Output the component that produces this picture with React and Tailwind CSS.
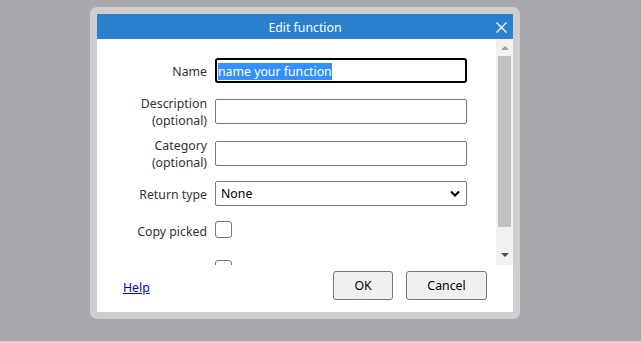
import React from "react";

const font = { fontFamily: '"Noto Sans", "Open Sans", sans-serif' };

const Row = ({ label, className, labelClass = "", children }) => (
    <div className={`flex items-center ${className}`}>
        <div className={`w-[118px] shrink-0 pr-[8px] text-right text-[12.3px] leading-[17px] text-[#333] ${labelClass}`}>{label}</div>
        <div className="flex items-center">{children}</div>
    </div>
);

const Checkbox = () => (
    <div className="h-[17px] w-[17px] rounded-[3px] border border-[#767676] bg-white" />
);

export default function App() {
    return (
        <div className="flex h-[341px] w-[641px] items-start bg-[#a9a8ac] pl-[90px] pt-[7px]" style={font}>
            <div className="rounded-[7px] bg-[#cecece] p-[7px]">
                <div className="flex h-[298px] w-[416px] flex-col bg-white">
                    {/* title bar */}
                    <div className="flex h-[25px] items-center bg-[#2b80cd] text-white">
                        <div className="flex-1 pl-[24px] pt-[3px] text-center text-[12.3px]">Edit function</div>
                        <div className="flex w-[24px] items-center justify-center pt-[1px]">
                            <svg width="11" height="11" viewBox="0 0 11 11">
                                <path d="M0.5 0.5L10.5 10.5M10.5 0.5L0.5 10.5" stroke="white" strokeWidth="1.3" />
                            </svg>
                        </div>
                    </div>

                    {/* scroll area */}
                    <div className="flex h-[226px] overflow-hidden">
                        <div className="flex-1 overflow-hidden">
                            <Row label="Name" className="mt-[19px] h-[25px]" labelClass="pt-[1px]">
                                <div className="flex h-[25px] w-[252px] items-center rounded-[3px] border-2 border-black pl-[1px] pt-[1px] text-[12.3px]">
                                    <span className="bg-[#3390ff] leading-[17px] text-white">name your function</span>
                                </div>
                            </Row>
                            <Row label={<>Description<br />(optional)</>} className="mt-[11px] h-[34px]" labelClass="pt-[2px]">
                                <div className="h-[25px] w-[252px] rounded-[2px] border border-[#767676]" />
                            </Row>
                            <Row label={<>Category<br />(optional)</>} className="mt-[8px] h-[34px]" labelClass="pt-[2px]">
                                <div className="h-[25px] w-[252px] rounded-[2px] border border-[#767676]" />
                            </Row>
                            <Row label="Return type" className="mt-[11px] h-[25px]" labelClass="pt-[2px]">
                                <div className="flex h-[25px] w-[252px] items-center justify-between rounded-[2px] border border-[#767676] pl-[5px] pr-[6px] text-[12.3px] text-black">
                                    <span className="pt-[2px]">None</span>
                                    <svg width="10" height="7" viewBox="0 0 10 7">
                                        <path d="M1 1.5L5 5.5L9 1.5" stroke="black" strokeWidth="2" fill="none" />
                                    </svg>
                                </div>
                            </Row>
                            <Row label="Copy picked" className="mt-[15px] h-[17px]" labelClass="pt-[3px]">
                                <Checkbox />
                            </Row>
                            <Row label="" className="mt-[22px] h-[17px]">
                                <Checkbox />
                            </Row>
                        </div>
                        {/* scrollbar */}
                        <div className="flex w-[17px] flex-col items-center bg-[#f1f1f1]">
                            <svg className="mt-[7px]" width="8" height="4" viewBox="0 0 8 4">
                                <path d="M0 4L4 0L8 4Z" fill="#a3a3a3" />
                            </svg>
                            <div className="mt-[6px] h-[171px] w-[13px] bg-[#c1c1c1]" />
                            <div className="flex-1" />
                            <svg className="mb-[8px]" width="8" height="4" viewBox="0 0 8 4">
                                <path d="M0 0L4 4L8 0Z" fill="#505050" />
                            </svg>
                        </div>
                    </div>

                    {/* footer */}
                    <div className="flex flex-1 items-start justify-between pl-[26px] pr-[26px] pt-[6px]">
                        <a href="#" className="mt-[8px] text-[12.3px] text-[#0000ee] underline">Help</a>
                        <div className="flex gap-[13px]">
                            <button className="h-[29px] w-[60px] rounded-[3px] border border-[#767676] bg-[#efefef] pt-[1px] text-[12.3px] text-black">OK</button>
                            <button className="h-[29px] w-[81px] rounded-[3px] border border-[#767676] bg-[#efefef] pt-[1px] text-[12.3px] text-black">Cancel</button>
                        </div>
                    </div>
                </div>
            </div>
        </div>
    );
}
